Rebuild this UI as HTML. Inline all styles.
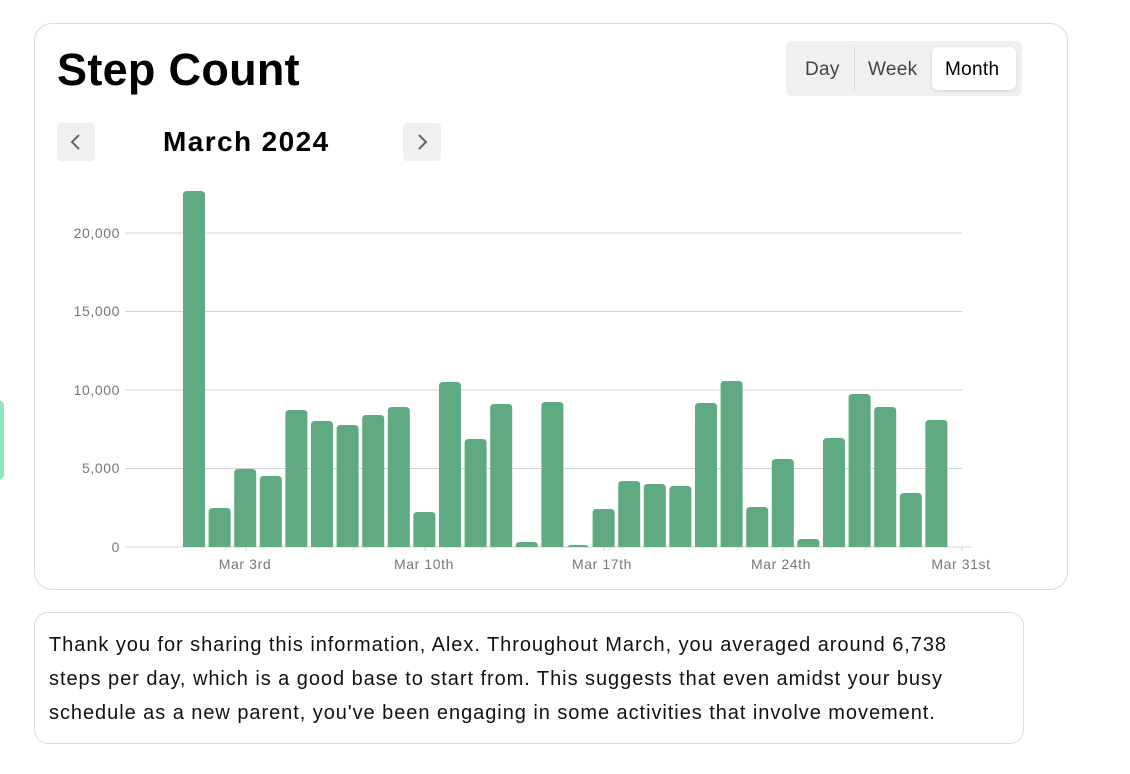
<!DOCTYPE html>
<html><head><meta charset="utf-8"><style>
*{margin:0;padding:0;box-sizing:border-box}
body{width:1130px;height:774px;background:#fff;font-family:"Liberation Sans",sans-serif;position:relative;overflow:hidden}
.card{position:absolute;left:34px;top:23px;width:1034px;height:567px;border:1.5px solid #dcdcdf;border-radius:18px}
.title{position:absolute;left:57px;top:44px;font-size:45px;font-weight:bold;color:#000;letter-spacing:0.3px}
.nav{position:absolute;top:123px;width:38px;height:38px;background:#f0f0f1;border-radius:4px}
.month{position:absolute;left:163px;top:126px;font-size:28px;font-weight:bold;color:#000;letter-spacing:1.4px}
.tog{position:absolute;left:786px;top:41px;width:236px;height:55px;background:#eff0f2;border-radius:6px}
.tog span{position:absolute;top:18px;font-size:19px;color:#444;letter-spacing:0.3px}
.pill{position:absolute;left:146px;top:6px;width:84px;height:43px;background:#fff;border-radius:6px;box-shadow:0 1px 3px rgba(0,0,0,.12)}
.txt{position:absolute;left:34px;top:612px;width:990px;height:132px;border:1.5px solid #dcdcdf;border-radius:14px;padding:15px 50px 15px 14px;font-size:20px;line-height:34px;color:#111;letter-spacing:0.95px}
.side{position:absolute;left:-8px;top:400px;width:12px;height:80px;background:#8fe3bd;border-radius:6px}
</style></head><body>
<div class="side"></div>
<div class="card"></div>
<div class="title">Step Count</div>
<div class="nav" style="left:57px"><svg width="38" height="38"><path d="M22 12 L15 19 L22 26" stroke="#666" stroke-width="2" fill="none"/></svg></div>
<div class="month">March 2024</div>
<div class="nav" style="left:403px"><svg width="38" height="38"><path d="M16 12 L23 19 L16 26" stroke="#666" stroke-width="2" fill="none"/></svg></div>
<div class="tog"><div style="position:absolute;left:68px;top:6px;width:1px;height:43px;background:#d8d8dc"></div><div class="pill"></div>
<span style="left:19px">Day</span><span style="left:82px">Week</span><span style="left:159px;color:#000">Month</span></div>
<svg style="position:absolute;left:0;top:0" width="1130" height="600" font-family="Liberation Sans, sans-serif" font-size="14" fill="#777" letter-spacing="0.6">
<g stroke="#d4d4d8" stroke-width="1">
<line x1="125" y1="233" x2="962" y2="233"/><line x1="125" y1="311.5" x2="962" y2="311.5"/><line x1="125" y1="390" x2="962" y2="390"/><line x1="125" y1="468.5" x2="962" y2="468.5"/><line x1="125" y1="547" x2="972" y2="547"/>
<line x1="246" y1="547" x2="246" y2="551"/><line x1="425" y1="547" x2="425" y2="551"/><line x1="604" y1="547" x2="604" y2="551"/><line x1="783" y1="547" x2="783" y2="551"/><line x1="962" y1="547" x2="962" y2="551"/>
</g>
<g text-anchor="end"><text x="120" y="238">20,000</text><text x="120" y="316">15,000</text><text x="120" y="395">10,000</text><text x="120" y="473">5,000</text><text x="120" y="552">0</text></g>
<g text-anchor="middle"><text x="245" y="569">Mar 3rd</text><text x="424" y="569">Mar 10th</text><text x="602" y="569">Mar 17th</text><text x="781" y="569">Mar 24th</text><text x="961" y="569">Mar 31st</text></g>
<g fill="#5faa81" id="bars"></g>
</svg>
<div class="txt">Thank you for sharing this information, Alex. Throughout March, you averaged around 6,738 steps per day, which is a good base to start from. This suggests that even amidst your busy schedule as a new parent, you've been engaging in some activities that involve movement.</div>
<script>
var t=[191,508,469,476,410,421,425,415,407,512,382,439,404,542,402,545,509,481,484,486,403,381,507,459,539,438,394,407,493,420];
var g=document.getElementById('bars'),s='';
t.forEach(function(y,i){var x=183+25.6*i;s+='<path d="M'+x+' 547 V'+(y+4)+' Q'+x+' '+y+' '+(x+4)+' '+y+' H'+(x+18)+' Q'+(x+22)+' '+y+' '+(x+22)+' '+(y+4)+' V547 Z"/>';});
g.innerHTML=s;
</script>
</body></html>
